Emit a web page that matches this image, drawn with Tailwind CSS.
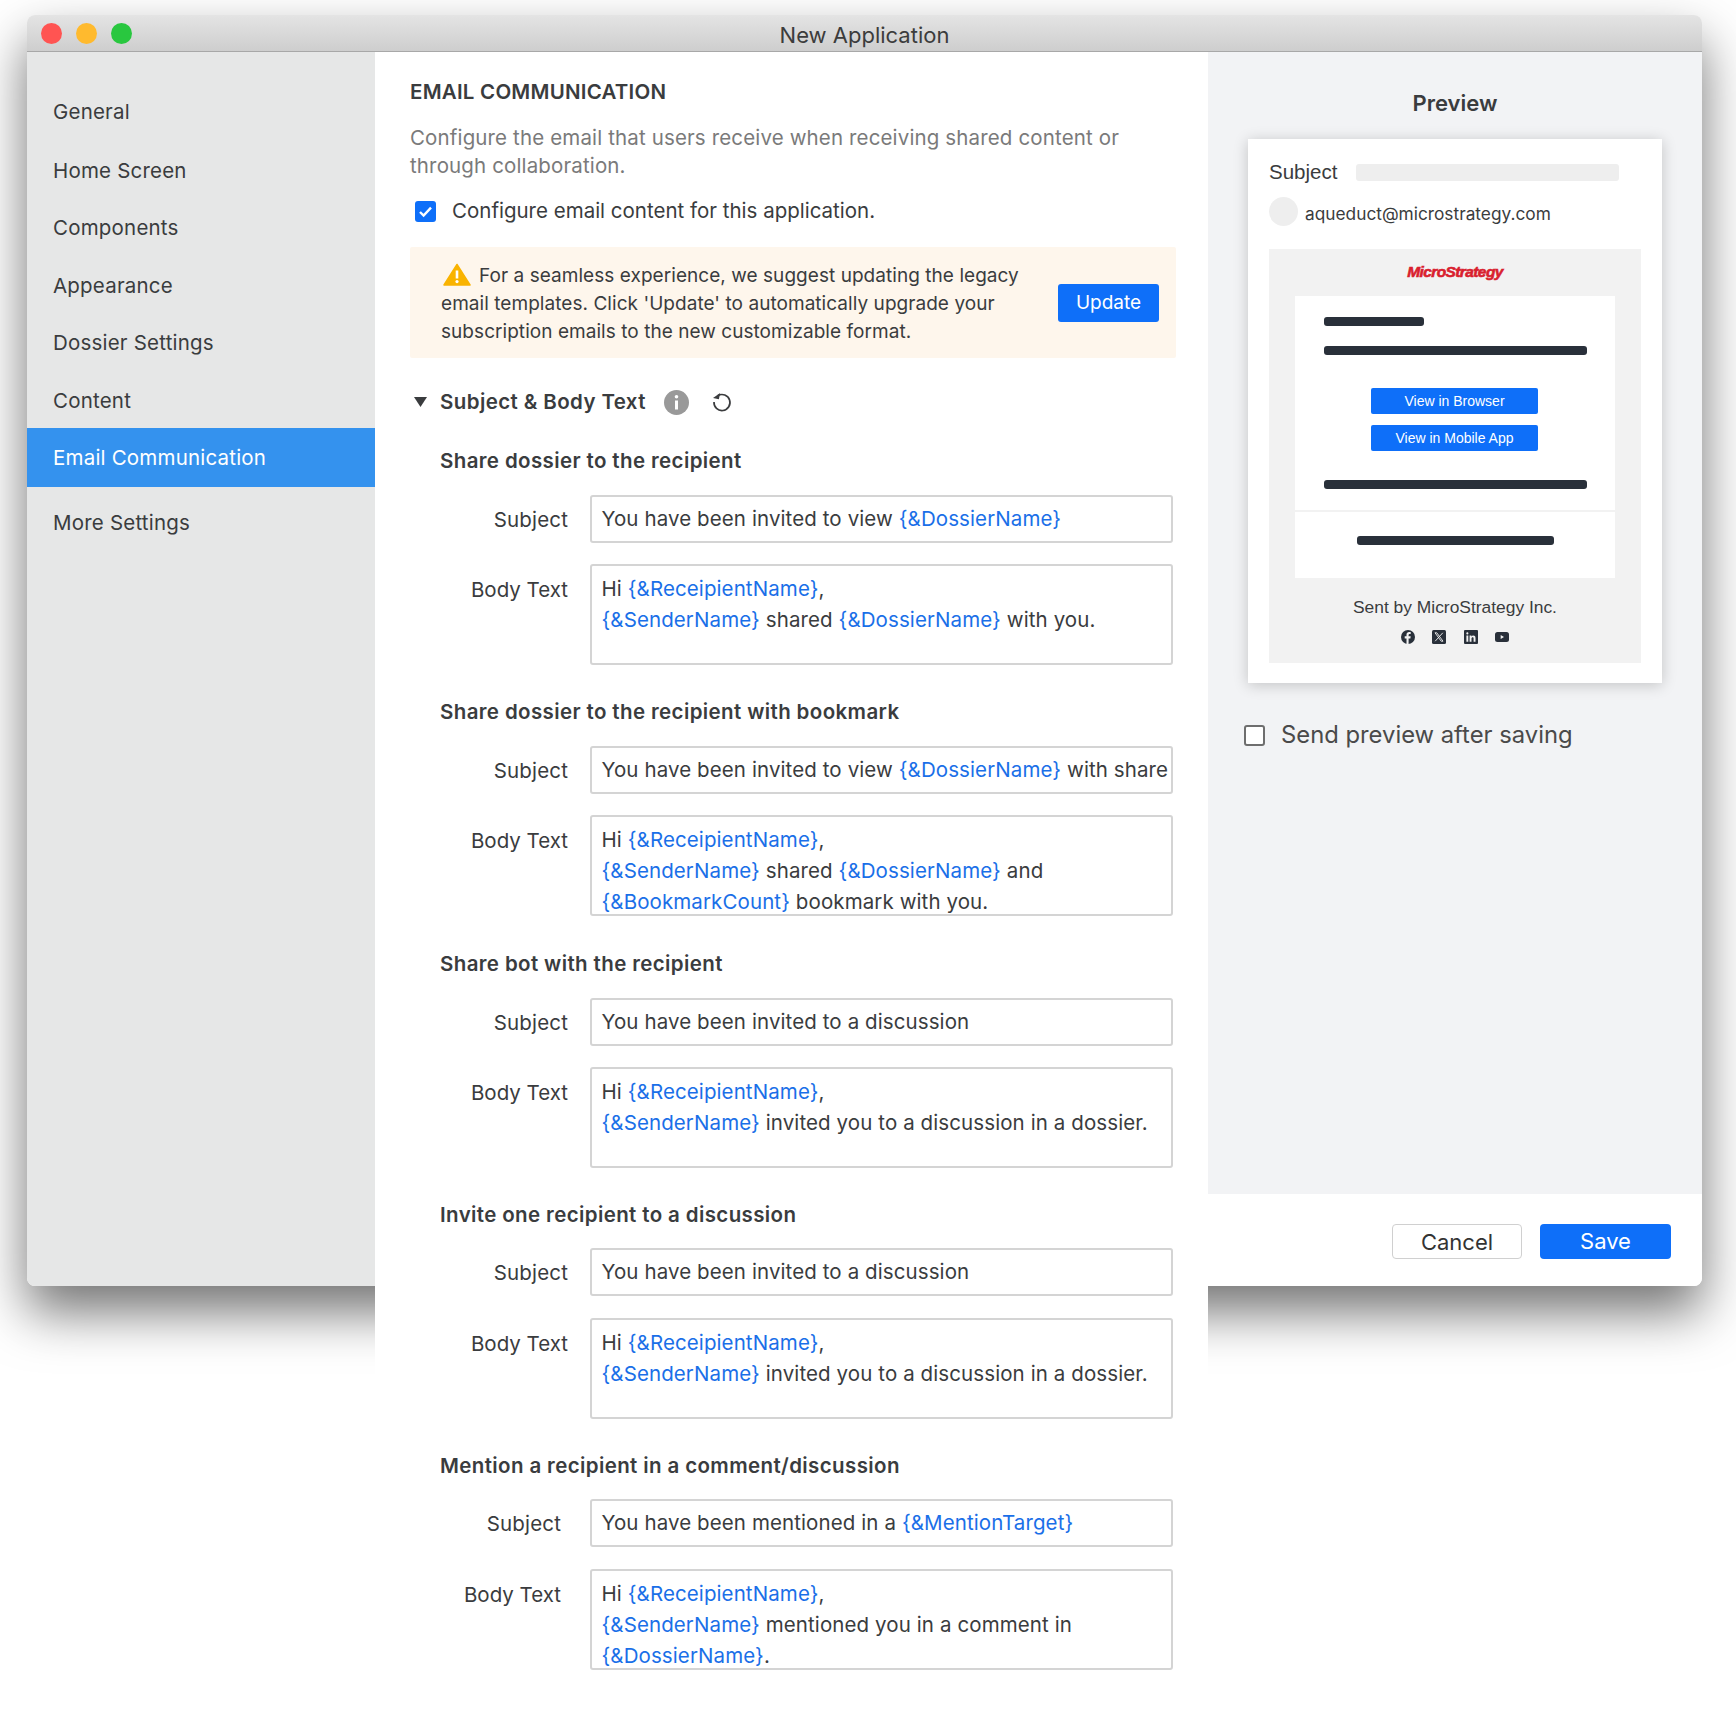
<!doctype html>
<html lang="en">
<head>
<meta charset="UTF-8">
<title>New Application</title>
<script src="https://cdn.jsdelivr.net/npm/@tailwindcss/browser@4"></script>
</head>
<body class="bg-white h-[1722px] overflow-hidden font-['Inter',sans-serif] text-[#3a3c3e]">
<div class="ml-[27px] pt-[15px] w-[1675px]">
  <div class="w-[1675px] h-[1271px] rounded-[8px] bg-white shadow-[0_26px_52px_rgba(0,0,0,0.55)]">
    <!-- title bar -->
    <div class="relative h-[37px] rounded-t-[8px] bg-gradient-to-b from-[#e4e4e4] to-[#cecece] border-b border-[#a8a8a8] flex items-center pl-[14px] gap-[14px]">
      <span class="w-[21px] h-[21px] rounded-full bg-[#ff5452]"></span>
      <span class="w-[21px] h-[21px] rounded-full bg-[#ffba2e]"></span>
      <span class="w-[21px] h-[21px] rounded-full bg-[#29c73f]"></span>
      <div class="absolute left-0 right-0 top-[6px] text-center text-[22px] leading-[28px] text-[#3c3c3c]">New Application</div>
    </div>
    <div class="flex items-start">
      <!-- sidebar -->
      <nav class="w-[348px] h-[1234px] bg-[#e6e7e7] rounded-bl-[8px] pt-[46px] text-[20.5px] leading-[28px] tracking-[0.2px] flex flex-col">
        <a class="pl-[26px] h-[28px] mb-[31px]">General</a>
        <a class="pl-[26px] h-[28px] mb-[29px]">Home Screen</a>
        <a class="pl-[26px] h-[28px] mb-[30px]">Components</a>
        <a class="pl-[26px] h-[28px] mb-[29px]">Appearance</a>
        <a class="pl-[26px] h-[28px] mb-[30px]">Dossier Settings</a>
        <a class="pl-[26px] h-[28px] mb-[13px]">Content</a>
        <a class="pl-[26px] h-[59px] leading-[59px] bg-[#3492ee] text-white">Email Communication</a>
        <a class="pl-[26px] h-[28px] mt-[22px]">More Settings</a>
      </nav>

      <!-- main form -->
      <main class="w-[833px] bg-white pl-[35px] pr-[32px] pt-[26px] pb-[60px]">
        <h2 class="h-[28px] text-[20.5px] leading-[28px] font-semibold tracking-[0.23px]">EMAIL COMMUNICATION</h2>
        <p class="mt-[18px] text-[20.5px] leading-[28px] tracking-[0.14px] text-[#7a7a7a]">Configure the email that users receive when receiving shared content or through collaboration.</p>
        <label class="mt-[17px] h-[28px] flex items-center pl-[5px] text-[20.5px]">
          <span class="w-[21px] h-[21px] rounded-[3px] bg-[#0e6ff9] flex items-center justify-center">
            <svg width="15" height="13" viewBox="0 0 15 13" fill="none"><path d="M2 7l3.6 3.6L13 2.6" stroke="#fff" stroke-width="2.4"/></svg>
          </span>
          <span class="ml-[16px]">Configure email content for this application.</span>
        </label>

        <div class="mt-[22px] h-[111px] bg-[#fef6ec] rounded-[2px] flex items-center pl-[31px] pr-[17px]">
          <p class="w-[591px] pt-[2px] text-[19px] leading-[28px] tracking-[0.05px]">
            <svg class="inline-block align-[-4px] mr-[8px] ml-[2px]" width="28" height="23" viewBox="0 0 28 23"><path d="M14 1.5L27 22H1z" fill="#f9b300" stroke="#f9b300" stroke-width="1.5" stroke-linejoin="round"/><path d="M14 7.5v8" stroke="#fff" stroke-width="2.6"/><circle cx="14" cy="18.6" r="1.6" fill="#fff"/></svg>For a seamless experience, we suggest updating the legacy email templates. Click 'Update' to automatically upgrade your subscription emails to the new customizable format.
          </p>
          <button class="ml-auto w-[101px] h-[38px] pt-[1px] rounded-[3px] bg-[#0e6ff9] text-white text-[19px]">Update</button>
        </div>

        <div class="mt-[30px] h-[28px] flex items-center">
          <svg class="ml-[4px]" width="13" height="10" viewBox="0 0 13 10"><path d="M0 0h13L6.5 10z" fill="#3a3c3e"/></svg>
          <h3 class="ml-[13px] text-[20.5px] font-semibold tracking-[0.4px]">Subject &amp; Body Text</h3>
          <svg class="ml-[18px]" width="25" height="25" viewBox="0 0 25 25"><circle cx="12.5" cy="12.5" r="12.5" fill="#999"/><circle cx="12.5" cy="6.8" r="1.8" fill="#fff"/><path d="M12.5 10.5v9" stroke="#fff" stroke-width="3"/></svg>
          <svg class="ml-[23px]" width="20" height="20" viewBox="0 0 20 20" fill="none"><path d="M6 3.6A8 8 0 1 1 2 10" stroke="#3a3c3e" stroke-width="1.7"/><path d="M7.5 0.5v6.2H1.5z" fill="#3a3c3e" transform="rotate(12 5 4)"/></svg>
        </div>

        <!-- group 1 -->
        <section class="mt-[31px]">
          <h4 class="pl-[30px] h-[28px] text-[20.5px] leading-[28px] font-semibold tracking-[0.38px]">Share dossier to the recipient</h4>
          <div class="mt-[20px] flex">
            <label class="w-[158px] pt-[11px] text-right text-[20.5px] leading-[28px] tracking-[0.15px]">Subject</label>
            <div class="ml-[22px] w-[583px] h-[48px] border-2 border-[#d4d4d4] rounded-[3px] pl-[9.5px] pt-[8px] text-[20.5px] leading-[28px] tracking-[0.1px] whitespace-nowrap overflow-hidden">You have been invited to view <span class="text-[#1a6fe8]">{&amp;DossierName}</span></div>
          </div>
          <div class="mt-[21px] flex">
            <label class="w-[158px] pt-[12px] text-right text-[20.5px] leading-[28px]">Body Text</label>
            <div class="ml-[22px] w-[583px] h-[101px] border-2 border-[#d4d4d4] rounded-[3px] pl-[9.5px] pt-[7px] text-[20.5px] leading-[31px] tracking-[0.1px] overflow-hidden">Hi <span class="text-[#1a6fe8]">{&amp;ReceipientName}</span>,<br><span class="text-[#1a6fe8]">{&amp;SenderName}</span> shared <span class="text-[#1a6fe8]">{&amp;DossierName}</span> with you.</div>
          </div>
        </section>

        <!-- group 2 -->
        <section class="mt-[33px]">
          <h4 class="pl-[30px] h-[28px] text-[20.5px] leading-[28px] font-semibold tracking-[0.38px]">Share dossier to the recipient with bookmark</h4>
          <div class="mt-[20px] flex">
            <label class="w-[158px] pt-[11px] text-right text-[20.5px] leading-[28px] tracking-[0.15px]">Subject</label>
            <div class="ml-[22px] w-[583px] h-[48px] border-2 border-[#d4d4d4] rounded-[3px] pl-[9.5px] pt-[8px] text-[20.5px] leading-[28px] tracking-[0.1px] whitespace-nowrap overflow-hidden">You have been invited to view <span class="text-[#1a6fe8]">{&amp;DossierName}</span> with share</div>
          </div>
          <div class="mt-[21px] flex">
            <label class="w-[158px] pt-[12px] text-right text-[20.5px] leading-[28px]">Body Text</label>
            <div class="ml-[22px] w-[583px] h-[101px] border-2 border-[#d4d4d4] rounded-[3px] pl-[9.5px] pt-[7px] text-[20.5px] leading-[31px] tracking-[0.1px] overflow-hidden">Hi <span class="text-[#1a6fe8]">{&amp;ReceipientName}</span>,<br><span class="text-[#1a6fe8]">{&amp;SenderName}</span> shared <span class="text-[#1a6fe8]">{&amp;DossierName}</span> and<br><span class="text-[#1a6fe8]">{&amp;BookmarkCount}</span> bookmark with you.</div>
          </div>
        </section>

        <!-- group 3 -->
        <section class="mt-[34px]">
          <h4 class="pl-[30px] h-[28px] text-[20.5px] leading-[28px] font-semibold tracking-[0.38px]">Share bot with the recipient</h4>
          <div class="mt-[20px] flex">
            <label class="w-[158px] pt-[11px] text-right text-[20.5px] leading-[28px] tracking-[0.15px]">Subject</label>
            <div class="ml-[22px] w-[583px] h-[48px] border-2 border-[#d4d4d4] rounded-[3px] pl-[9.5px] pt-[8px] text-[20.5px] leading-[28px] tracking-[0.1px] whitespace-nowrap overflow-hidden">You have been invited to a discussion</div>
          </div>
          <div class="mt-[21px] flex">
            <label class="w-[158px] pt-[12px] text-right text-[20.5px] leading-[28px]">Body Text</label>
            <div class="ml-[22px] w-[583px] h-[101px] border-2 border-[#d4d4d4] rounded-[3px] pl-[9.5px] pt-[7px] text-[20.5px] leading-[31px] tracking-[0.1px] overflow-hidden">Hi <span class="text-[#1a6fe8]">{&amp;ReceipientName}</span>,<br><span class="text-[#1a6fe8]">{&amp;SenderName}</span> invited you to a discussion in a dossier.</div>
          </div>
        </section>

        <!-- group 4 -->
        <section class="mt-[33px]">
          <h4 class="pl-[30px] h-[28px] text-[20.5px] leading-[28px] font-semibold tracking-[0.38px]">Invite one recipient to a discussion</h4>
          <div class="mt-[19px] flex">
            <label class="w-[158px] pt-[11px] text-right text-[20.5px] leading-[28px] tracking-[0.15px]">Subject</label>
            <div class="ml-[22px] w-[583px] h-[48px] border-2 border-[#d4d4d4] rounded-[3px] pl-[9.5px] pt-[8px] text-[20.5px] leading-[28px] tracking-[0.1px] whitespace-nowrap overflow-hidden">You have been invited to a discussion</div>
          </div>
          <div class="mt-[22px] flex">
            <label class="w-[158px] pt-[12px] text-right text-[20.5px] leading-[28px]">Body Text</label>
            <div class="ml-[22px] w-[583px] h-[101px] border-2 border-[#d4d4d4] rounded-[3px] pl-[9.5px] pt-[7px] text-[20.5px] leading-[31px] tracking-[0.1px] overflow-hidden">Hi <span class="text-[#1a6fe8]">{&amp;ReceipientName}</span>,<br><span class="text-[#1a6fe8]">{&amp;SenderName}</span> invited you to a discussion in a dossier.</div>
          </div>
        </section>

        <!-- group 5 -->
        <section class="mt-[33px]">
          <h4 class="pl-[30px] h-[28px] text-[20.5px] leading-[28px] font-semibold tracking-[0.38px]">Mention a recipient in a comment/discussion</h4>
          <div class="mt-[19px] flex">
            <label class="w-[158px] pr-[7px] pt-[11px] text-right text-[20.5px] leading-[28px] tracking-[0.15px]">Subject</label>
            <div class="ml-[22px] w-[583px] h-[48px] border-2 border-[#d4d4d4] rounded-[3px] pl-[9.5px] pt-[8px] text-[20.5px] leading-[28px] tracking-[0.1px] whitespace-nowrap overflow-hidden">You have been mentioned in a <span class="text-[#1a6fe8]">{&amp;MentionTarget}</span></div>
          </div>
          <div class="mt-[22px] flex">
            <label class="w-[158px] pr-[7px] pt-[12px] text-right text-[20.5px] leading-[28px]">Body Text</label>
            <div class="ml-[22px] w-[583px] h-[101px] border-2 border-[#d4d4d4] rounded-[3px] pl-[9.5px] pt-[7px] text-[20.5px] leading-[31px] tracking-[0.1px] overflow-hidden">Hi <span class="text-[#1a6fe8]">{&amp;ReceipientName}</span>,<br><span class="text-[#1a6fe8]">{&amp;SenderName}</span> mentioned you in a comment in<br><span class="text-[#1a6fe8]">{&amp;DossierName}</span>.</div>
          </div>
        </section>
      </main>

      <!-- preview column -->
      <aside class="w-[494px] h-[1234px] flex flex-col rounded-br-[8px]">
        <div class="h-[1142px] bg-[#f2f3f5] pt-[37px]">
          <h3 class="h-[28px] text-center text-[22px] leading-[28px] font-semibold">Preview</h3>
          <div class="ml-[40px] mt-[22px] w-[414px] h-[544px] bg-white shadow-[0_2px_14px_rgba(0,0,0,0.2)] pl-[21px] pt-[19px]">
            <div class="flex items-center h-[28px] font-['Liberation_Sans',sans-serif] text-[20.5px]">
              <span>Subject</span>
              <span class="ml-[19px] w-[263px] h-[17px] rounded-[3px] bg-[#eeeeee]"></span>
            </div>
            <div class="mt-[11px] h-[29px] flex items-center">
              <span class="w-[29px] h-[29px] rounded-full bg-[#eeeeee]"></span>
              <span class="ml-[7px] pt-[4px] leading-[24px] text-[17.3px]">aqueduct@microstrategy.com</span>
            </div>
            <div class="mt-[23px] w-[372px] h-[414px] bg-[#f2f2f2] flex flex-col items-center">
              <div class="h-[47px] pt-[12px] font-['Liberation_Sans',sans-serif] font-bold italic text-[15.5px] leading-[22px] tracking-[-0.6px] text-[#d9202e] [-webkit-text-stroke:0.6px_#d9202e]">MicroStrategy</div>
              <div class="w-[320px] h-[282px] bg-white flex flex-col">
                <span class="ml-[29px] mt-[21px] w-[100px] h-[9px] rounded-[3px] bg-[#29303a]"></span>
                <span class="ml-[29px] mt-[20px] w-[263px] h-[9px] rounded-[3px] bg-[#29303a]"></span>
                <a class="ml-[76px] mt-[33px] w-[167px] h-[26px] rounded-[2px] bg-[#0e6ff9] text-white text-center font-['Liberation_Sans',sans-serif] text-[14px] leading-[26px]">View in Browser</a>
                <a class="ml-[76px] mt-[11px] w-[167px] h-[26px] rounded-[2px] bg-[#0e6ff9] text-white text-center font-['Liberation_Sans',sans-serif] text-[14px] leading-[26px]">View in Mobile App</a>
                <span class="ml-[29px] mt-[29px] w-[263px] h-[9px] rounded-[3px] bg-[#29303a]"></span>
                <div class="mt-[21px] h-[2px] bg-[#f2f2f2]"></div>
                <span class="ml-[62px] mt-[24px] w-[197px] h-[9px] rounded-[3px] bg-[#29303a]"></span>
              </div>
              <div class="mt-[18px] h-[22px] font-['Liberation_Sans',sans-serif] text-[17.4px] leading-[22px]">Sent by MicroStrategy Inc.</div>
              <div class="mt-[12px] flex gap-[17.5px]">
                <svg width="14" height="14" viewBox="0 0 14 14"><circle cx="7" cy="7" r="7" fill="#29303a"/><path d="M7.6 14V8.4h1.8l.3-2.1H7.6V5c0-.6.3-1.1 1.1-1.1h1V2.1c-.5-.1-1-.1-1.5-.1-1.7 0-2.7 1-2.7 2.8v1.5H3.7v2.1h1.8V14z" fill="#f2f2f2"/></svg>
                <svg width="14" height="14" viewBox="0 0 14 14"><rect width="14" height="14" rx="1.5" fill="#29303a"/><path d="M3 2.8h1.8l6.2 8.4H9.2z" fill="none" stroke="#f2f2f2" stroke-width="0.9"/><path d="M10.8 2.8L3.2 11.2" stroke="#f2f2f2" stroke-width="0.9"/></svg>
                <svg width="14" height="14" viewBox="0 0 14 14"><rect width="14" height="14" rx="1" fill="#29303a"/><path d="M2.4 5.6h1.9V11.8H2.4zM2.3 3.4a1.05 1.05 0 1 0 2.1 0a1.05 1.05 0 1 0-2.1 0zM5.6 5.6h1.8v.9c.4-.6 1-1 1.9-1 1.7 0 2.2 1.1 2.2 2.7v3.6H9.6V8.6c0-.8-.2-1.4-.9-1.4-.8 0-1.2.6-1.2 1.4v3.2H5.6z" fill="#f2f2f2"/></svg>
                <svg width="14" height="14" viewBox="0 0 14 14"><rect y="2" width="14" height="10" rx="2.5" fill="#29303a"/><path d="M5.7 5v4L9 7z" fill="#f2f2f2"/></svg>
              </div>
            </div>
          </div>
          <label class="mt-[41px] ml-[36px] h-[22px] flex items-center text-[23.8px] text-[#4a4a4a]">
            <span class="w-[21px] h-[21px] rounded-[3px] border-2 border-[#6e6e6e] bg-white"></span>
            <span class="ml-[16px]">Send preview after saving</span>
          </label>
        </div>
        <div class="h-[92px] bg-white rounded-br-[8px] flex justify-end pt-[30px] pr-[31px] gap-[18px]">
          <button class="w-[130px] h-[35px] pt-[1px] rounded-[4px] border border-[#d0d0d0] bg-white text-[22px] leading-[33px] text-[#333]">Cancel</button>
          <button class="w-[131px] h-[35px] rounded-[4px] bg-[#0e6ff9] text-white text-[22px] leading-[35px]">Save</button>
        </div>
      </aside>
    </div>
  </div>
</div>
</body>
</html>
